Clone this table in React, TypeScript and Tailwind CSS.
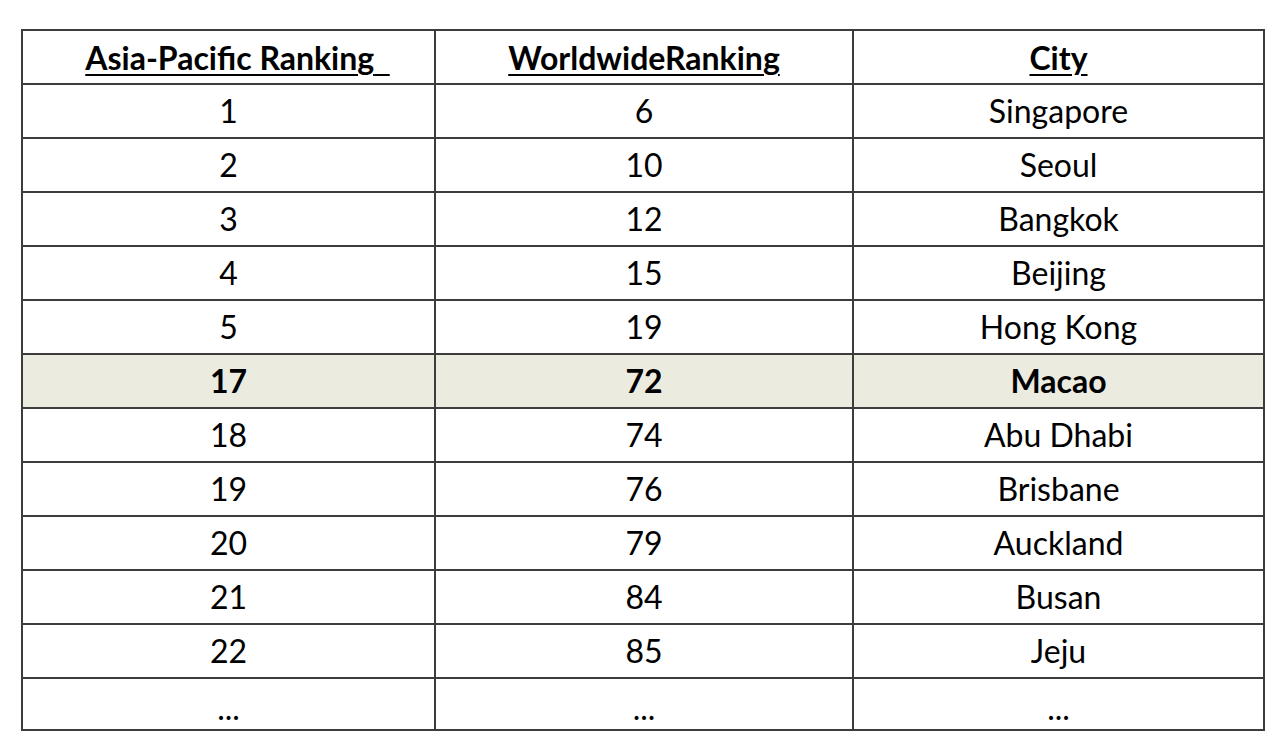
const rows: Array<[string, string, string, boolean?]> = [
  ['1', '6', 'Singapore'],
  ['2', '10', 'Seoul'],
  ['3', '12', 'Bangkok'],
  ['4', '15', 'Beijing'],
  ['5', '19', 'Hong Kong'],
  ['17', '72', 'Macao', true],
  ['18', '74', 'Abu Dhabi'],
  ['19', '76', 'Brisbane'],
  ['20', '79', 'Auckland'],
  ['21', '84', 'Busan'],
  ['22', '85', 'Jeju'],
];

export default function App() {
  return (
    <div className="min-h-[749px] w-[1280px] bg-white pl-[21px] pt-[29px] font-['Lato','Open_Sans',sans-serif] text-black">
      <table className="w-[1242px] table-fixed border-collapse border-2 border-[#3c3c3c] text-center text-[32px] leading-none">
        <colgroup>
          <col className="w-[413px]" />
          <col className="w-[418px]" />
          <col className="w-[411px]" />
        </colgroup>
        <thead>
          <tr className="h-[54px] font-bold">
            <th className="border-2 border-[#3c3c3c] pt-0.5 font-bold">
              <span className="underline decoration-2 underline-offset-[4px]">
                Asia-Pacific Ranking
                <span className="-mr-[18px]">&nbsp;&nbsp;</span>
              </span>
            </th>
            <th className="border-2 border-[#3c3c3c] pt-0.5 font-bold">
              <span className="underline decoration-2 underline-offset-[4px]">WorldwideRanking</span>
            </th>
            <th className="border-2 border-[#3c3c3c] pt-0.5 font-bold">
              <span className="underline decoration-2 underline-offset-[4px]">City</span>
            </th>
          </tr>
        </thead>
        <tbody>
          {rows.map(([a, w, c, hl]) => (
            <tr key={a} className={hl ? 'h-[54px] bg-[#ecebe0] font-bold' : 'h-[54px]'}>
              <td className="border-2 border-[#3c3c3c]">{a}</td>
              <td className="border-2 border-[#3c3c3c]">{w}</td>
              <td className="border-2 border-[#3c3c3c]">{c}</td>
            </tr>
          ))}
          <tr className="h-[52px]">
            <td className="border-2 border-[#3c3c3c] pt-2">...</td>
            <td className="border-2 border-[#3c3c3c] pt-2">...</td>
            <td className="border-2 border-[#3c3c3c] pt-2">...</td>
          </tr>
        </tbody>
      </table>
    </div>
  );
}
